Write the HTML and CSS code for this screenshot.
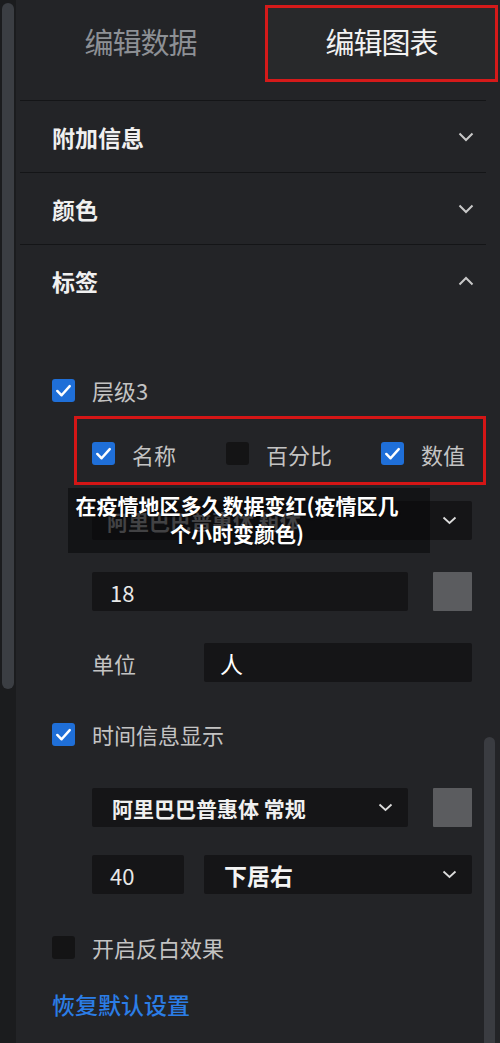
FILE: index.html
```html
<!DOCTYPE html>
<html lang="zh">
<head>
<meta charset="utf-8">
<link rel="stylesheet" href="styles.css">
</head>
<body>
<div class="app">
  <div class="gutter"><div class="gutter-thumb"></div></div>
  <div class="panel">
    <div class="tabs">
      <div class="tab">编辑数据</div>
      <div class="tab active">编辑图表</div>
    </div>
    <div class="sections">
      <div class="section">
        <div class="sec-head"><span>附加信息</span>
          <svg class="chev" width="16" height="10" viewBox="0 0 16 10"><polyline points="1.5,1.5 8,8 14.5,1.5"/></svg>
        </div>
      </div>
      <div class="section">
        <div class="sec-head"><span>颜色</span>
          <svg class="chev" width="16" height="10" viewBox="0 0 16 10"><polyline points="1.5,1.5 8,8 14.5,1.5"/></svg>
        </div>
      </div>
      <div class="section">
        <div class="sec-head"><span>标签</span>
          <svg class="chev" width="16" height="10" viewBox="0 0 16 10"><polyline points="1.5,8.5 8,2 14.5,8.5"/></svg>
        </div>
        <div class="sec-body">
          <div class="check-row level">
            <span class="cb on"><svg viewBox="0 0 24 24"><polyline points="5.5,12.5 10,17 18.5,7.5"/></svg></span>
            <span class="lbl">层级3</span>
          </div>
          <div class="hl-box">
            <div class="opt">
              <span class="cb on"><svg viewBox="0 0 24 24"><polyline points="5.5,12.5 10,17 18.5,7.5"/></svg></span>
              <span class="lbl">名称</span>
            </div>
            <div class="opt">
              <span class="cb"></span>
              <span class="lbl">百分比</span>
            </div>
            <div class="opt">
              <span class="cb on"><svg viewBox="0 0 24 24"><polyline points="5.5,12.5 10,17 18.5,7.5"/></svg></span>
              <span class="lbl">数值</span>
            </div>
          </div>
          <div class="field-row first">
            <div class="select wide dim"><span>阿里巴巴普惠体 粗体</span>
              <svg class="schev" width="15" height="9" viewBox="0 0 15 9"><polyline points="1.5,1.5 7.5,7 13.5,1.5"/></svg>
            </div>
          </div>
          <div class="field-row gap32">
            <div class="input long">18</div>
            <div class="swatch"></div>
          </div>
          <div class="field-row gap32">
            <span class="lbl unit">单位</span>
            <div class="input mid white">人</div>
          </div>
          <div class="check-row time">
            <span class="cb on"><svg viewBox="0 0 24 24"><polyline points="5.5,12.5 10,17 18.5,7.5"/></svg></span>
            <span class="lbl">时间信息显示</span>
          </div>
          <div class="field-row gap42">
            <div class="select long bold"><span>阿里巴巴普惠体 常规</span>
              <svg class="schev" width="15" height="9" viewBox="0 0 15 9"><polyline points="1.5,1.5 7.5,7 13.5,1.5"/></svg>
            </div>
            <div class="swatch"></div>
          </div>
          <div class="field-row gap29">
            <div class="input short">40</div>
            <div class="select mid pos"><span>下居右</span>
              <svg class="schev" width="15" height="9" viewBox="0 0 15 9"><polyline points="1.5,1.5 7.5,7 13.5,1.5"/></svg>
            </div>
          </div>
          <div class="check-row invert">
            <span class="cb"></span>
            <span class="lbl">开启反白效果</span>
          </div>
          <div class="reset">恢复默认设置</div>
        </div>
      </div>
    </div>
    <div class="vthumb"></div>
  </div>
  <div class="caption">在疫情地区多久数据变红(疫情区几<br>个小时变颜色)</div>
</div>
</body>
</html>
```

FILE: styles.css
```css
* { box-sizing: border-box; }
html, body {
  margin: 0;
  padding: 0;
  background: #232427;
}
body {
  font-family: "Noto Sans CJK SC", "Noto Sans", sans-serif;
  color: #c6c6c6;
}
.app {
  position: relative;
  display: flex;
  width: 500px;
  height: 1043px;
  overflow: hidden;
}
.gutter {
  width: 16px;
  flex: none;
  background: #1b1c1e;
  padding: 3px 2px 0 2px;
}
.gutter-thumb {
  height: 686px;
  background: #3b3e43;
  border-radius: 6px;
}
.panel {
  position: relative;
  flex: 1;
  background: #232427;
}
.tabs {
  display: flex;
  height: 100px;
}
.tab {
  display: flex;
  align-items: center;
  justify-content: center;
  font-size: 29px;
  color: #8d9095;
  letter-spacing: -1px;
}
.tab:first-child {
  width: 249px;
  height: 82px;
}
.tab.active {
  width: 233px;
  height: 77px;
  margin-top: 5px;
  border: 3px solid #d51a1a;
  background: #28292b;
  color: #f2f2f2;
  padding-bottom: 6px;
}
.sections {
  margin: 0 20px 0 4px;
}
.section {
  border-top: 1px solid #141517;
}
.sec-head {
  height: 71px;
  display: flex;
  align-items: center;
  justify-content: space-between;
  padding: 1px 12px 0 32px;
  font-size: 23px;
  font-weight: 700;
  color: #f0f0f0;
}
.chev polyline {
  fill: none;
  stroke: #c8c8c8;
  stroke-width: 2;
}
.sec-body {
  padding-left: 32px;
  display: flex;
  flex-direction: column;
}
.check-row {
  display: flex;
  align-items: center;
  height: 24px;
}
.check-row .lbl {
  margin-left: 17px;
}
.level { margin-top: 62px; }
.time { margin-top: 40px; }
.invert { margin-top: 41px; }
.lbl {
  font-size: 22px;
  color: #c3c3c3;
  white-space: nowrap;
}
.cb {
  width: 23px;
  height: 23px;
  border-radius: 3px;
  background: #141415;
  flex: none;
  display: flex;
}
.cb.on {
  background: #1f6fd8;
}
.cb svg {
  width: 23px;
  height: 23px;
}
.cb polyline {
  fill: none;
  stroke: #ffffff;
  stroke-width: 2.6;
  stroke-linecap: round;
  stroke-linejoin: round;
}
.hl-box {
  margin-top: 14px;
  margin-left: 22px;
  width: 412px;
  height: 69px;
  border: 3px solid #d41616;
  display: grid;
  grid-template-columns: 134px 155px auto;
  align-items: center;
  padding: 6px 0 0 15px;
}
.opt {
  display: flex;
  align-items: center;
}
.opt .lbl {
  margin-left: 17px;
}
.field-row {
  display: flex;
  align-items: center;
  margin-left: 40px;
  height: 39px;
}
.field-row.first { margin-top: 16px; }
.gap32 { margin-top: 32px; }
.gap42 { margin-top: 42px; }
.gap29 { margin-top: 28px; }
.input, .select {
  height: 39px;
  background: #151517;
  border-radius: 2px;
  display: flex;
  align-items: center;
  font-size: 22px;
  color: #e8e8e8;
}
.input {
  padding-left: 18px;
}
.input.long { width: 316px; }
.input.short { width: 92px; }
.input.mid { width: 268px; padding-left: 16px; }
.input.white { color: #ffffff; font-size: 23px; }
.unit { width: 112px; }
.swatch {
  width: 39px;
  height: 39px;
  background: #5b5c5f;
  margin-left: 25px;
  border-radius: 1px;
}
.select {
  justify-content: space-between;
  padding: 0 15px 0 20px;
}
.select.wide { width: 380px; padding-left: 15px; }
.select.long { width: 316px; }
.select.mid { width: 268px; margin-left: 20px; }
.select.dim span {
  color: #8a8a8c;
  font-weight: 700;
  font-size: 21px;
}
.select.bold span {
  font-weight: 700;
  font-size: 21px;
  color: #f0f0f0;
}
.select.pos span {
  font-weight: 700;
  font-size: 23px;
  color: #f4f4f4;
}
.schev polyline {
  fill: none;
  stroke: #dcdcdc;
  stroke-width: 1.8;
}
.reset {
  margin-top: 29px;
  font-size: 23px;
  line-height: 32px;
  color: #2b7de6;
  font-weight: 500;
}
.vthumb {
  position: absolute;
  left: 468px;
  top: 737px;
  width: 11px;
  height: 320px;
  border-radius: 6px;
  background: #3a3c41;
}
.caption {
  position: absolute;
  left: 68px;
  top: 488px;
  width: 362px;
  height: 65px;
  background: rgba(8, 8, 9, 0.55);
  color: #ffffff;
  font-weight: 700;
  font-size: 21px;
  line-height: 28px;
  text-align: center;
  padding: 3px 24px 0 0;
  text-shadow: 0 1px 2px rgba(0,0,0,0.6);
  white-space: nowrap;
}
```
